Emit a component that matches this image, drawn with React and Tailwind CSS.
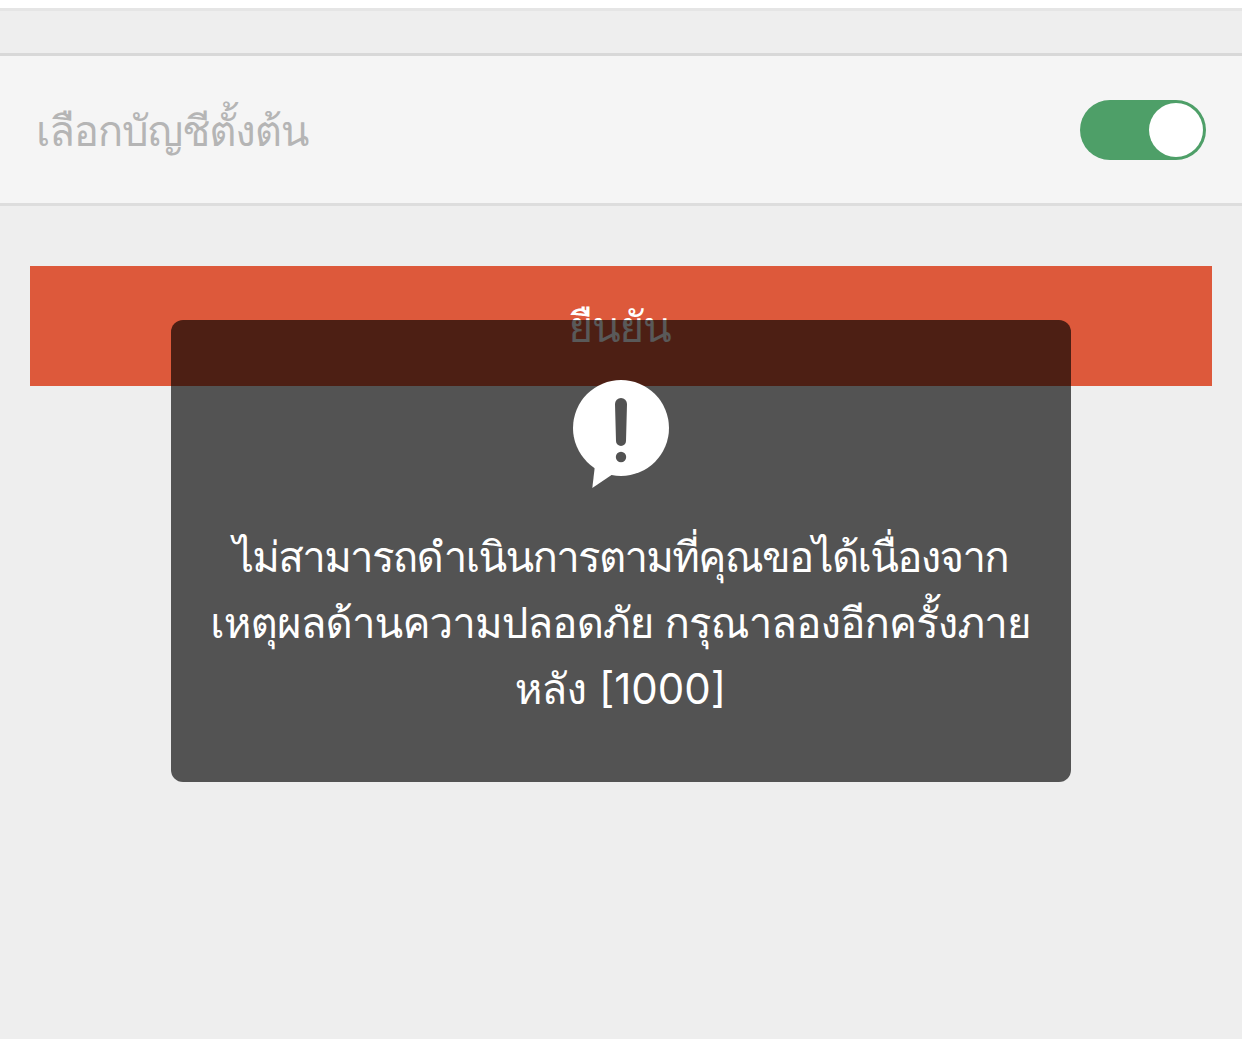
import React, { useState } from "react";

function Toggle({ enabled, onChange }) {
  return (
    <button
      role="switch"
      aria-checked={enabled}
      onClick={() => onChange(!enabled)}
      className={`flex h-[60px] w-[126px] items-center rounded-full bg-[#4e9f68] p-[3px] ${
        enabled ? "justify-end" : "justify-start"
      }`}
    >
      <span className="size-[54px] rounded-full bg-white" />
    </button>
  );
}

// Speech bubble with exclamation mark
function AlertIcon() {
  return (
    <svg width="96" height="108" viewBox="0 0 96 108" className="text-[#525252]">
      <circle cx="48" cy="48" r="48" fill="#fff" />
      <path d="M22 85L19.300 108L40 94z" fill="#fff" />
      <path d="M42 24a6 6 0 0 1 12 0L53 61a5 5 0 0 1-10 0z" fill="currentColor" />
      <circle cx="48" cy="77" r="5.200" fill="currentColor" />
    </svg>
  );
}

function App() {
  const [isDefault, setIsDefault] = useState(true);

  return (
    <div
      lang="th"
      className="relative h-[1039px] w-full overflow-hidden bg-[#eeeeee] font-['Inter','Loma',sans-serif] text-[42px] tracking-[-1.2px]"
    >
      <div className="h-[11px] border-b-3 border-[#e5e5e5] bg-white" />

      {/* Default account row */}
      <div className="mt-[42px] flex h-[153px] items-center justify-between border-t-3 border-b-3 border-t-[#d8d8d8] border-b-[#dddddd] bg-[#f5f5f5] px-9">
        <span className="pt-px whitespace-nowrap text-[#b5b5b5]">เลือกบัญชีตั้งต้น</span>
        <Toggle enabled={isDefault} onChange={setIsDefault} />
      </div>

      <div className="px-[30px] pt-[60px]">
        <button className="flex h-[120px] w-full items-center justify-center bg-[#dd593b] pt-px pr-[3px] text-white">
          ยืนยัน
        </button>
      </div>

      {/* Error toast */}
      <div className="absolute top-[320px] left-[171px] flex h-[462px] w-[900px] flex-col items-center rounded-xl bg-black/65 pt-[60px]">
        <AlertIcon />
        <div className="mt-9 pr-px text-center leading-[66px] whitespace-nowrap text-white">
          <p className="tracking-[-1.7px]">ไม่สามารถดำเนินการตามที่คุณขอได้เนื่องจาก</p>
          <p className="tracking-[-0.9px]">เหตุผลด้านความปลอดภัย กรุณาลองอีกครั้งภาย</p>
          <p className="tracking-[-0.9px]">
            หลัง <span className="ml-[2px] tracking-normal">[1000]</span>
          </p>
        </div>
      </div>
    </div>
  );
}

export default App;
